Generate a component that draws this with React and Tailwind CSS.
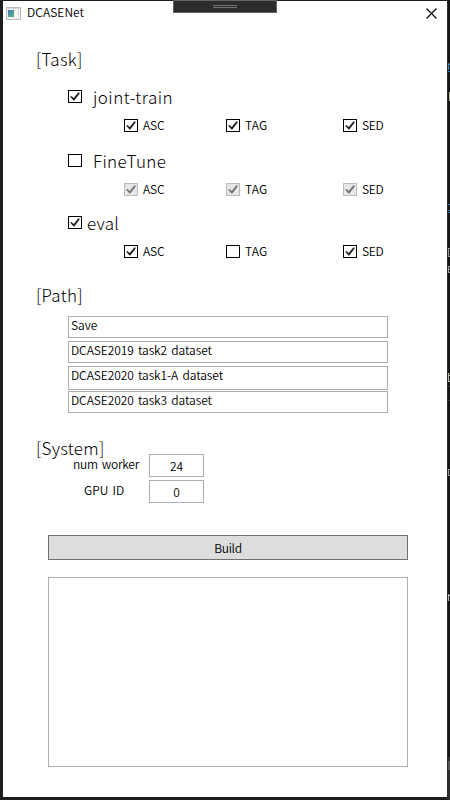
import React from "react";

const checkRow = "flex h-[13px] items-center";

function Check({ checked, disabled }) {
  return (
    <span
      className={
        "block h-[13px] w-[14px] shrink-0 border " +
        (disabled ? "border-[#bcbcbc] bg-[#e6e6e6]" : "border-black bg-white")
      }
    >
      {checked && (
        <svg width="12" height="11" viewBox="0 0 12 11" className="block">
          <path
            d="M1.2 5.8 L2.5 4.9 L4.7 7 L9.2 1.4 L10.6 1.5 L10.5 2.7 L5.3 9.4 L4.5 9.4 Z"
            fill={disabled ? "#707070" : "#212121"}
          />
        </svg>
      )}
    </span>
  );
}

function Option({ label, width, checked = true, disabled, spacing }) {
  return (
    <label className={`${checkRow} ${width}`}>
      <Check checked={checked} disabled={disabled} />
      <span className={`-mt-[2px] ml-[5px] text-[12px] leading-[14px] ${spacing}`}>{label}</span>
    </label>
  );
}

function Options({ tag = true, disabled, className }) {
  return (
    <div className={`ml-[121px] flex ${className}`}>
      <Option label="ASC" width="w-[102px]" spacing="tracking-[-0.1px]" disabled={disabled} />
      <Option label="TAG" width="w-[117px]" spacing="tracking-[0.2px]" checked={tag} disabled={disabled} />
      <Option label="SED" width="w-[60px]" spacing="tracking-[-0.3px]" disabled={disabled} />
    </div>
  );
}

function Task({ label, checked, gap, spacing, className }) {
  return (
    <label className={`ml-[65px] ${checkRow} ${className}`}>
      <Check checked={checked} />
      <span className={`mt-px text-[17px] leading-[20px] font-light ${gap} ${spacing}`}>{label}</span>
    </label>
  );
}

function Heading({ children, className, spacing }) {
  return (
    <h2 className={`ml-[33px] h-5 text-[17px] leading-[20px] font-light ${spacing} ${className}`}>{children}</h2>
  );
}

function Field({ children, className }) {
  return (
    <div className={`w-[320px] border border-[#abadb3] pl-[2px] text-[12px] leading-[16px] ${className}`}>
      {children}
    </div>
  );
}

function Setting({ label, value, spacing }) {
  return (
    <div className="flex h-[23px]">
      <span className={`text-[12px] leading-[20px] ${spacing}`}>{label}</span>
      <span className="ml-auto w-[55px] border border-[#abadb3] text-center text-[12px] leading-[21px]">
        {value}
      </span>
    </div>
  );
}

function Backdrop() {
  return (
    <div className="absolute top-0 left-[447px] h-[800px] w-[3px] overflow-hidden border-l border-[#2b2b2c] bg-[#151516]">
      <span className="absolute top-[63px] left-0 h-[7px] w-px bg-[#3e86b7]" />
      <span className="absolute top-[64px] left-px h-px w-px bg-[#3e86b7]" />
      <span className="absolute top-[71px] left-0 h-px w-[2px] bg-[#3e86b7]" />
      <span className="absolute top-[92px] left-px h-[9px] w-px bg-[#b9b9a8]" />
      <span className="absolute top-[204px] left-0 h-px w-[2px] bg-[#3478a8]" />
      <span className="absolute top-[210px] left-0 h-px w-[2px] bg-[#3478a8]" />
      <span className="absolute top-[212px] left-0 h-px w-[2px] bg-[#3478a8]" />
      <span className="absolute top-[248px] left-0 h-[9px] w-[5px] border border-[#999]" />
      <span className="absolute top-[266px] left-0 h-[7px] w-[5px] border border-[#999]" />
      <span className="absolute top-[269px] left-0 h-px w-[2px] bg-[#999]" />
      <span className="absolute top-[373px] left-0 h-[9px] w-px bg-[#b9b9a8]" />
      <span className="absolute top-[375px] left-0 h-px w-[2px] bg-[#b9b9a8]" />
      <span className="absolute top-[381px] left-px h-px w-px bg-[#b9b9a8]" />
      <span className="absolute top-[386px] left-0 h-px w-[2px] bg-[#333337]" />
      <span className="absolute top-[400px] left-0 h-px w-[2px] bg-[#333337]" />
      <span className="absolute top-[469px] left-0 h-[7px] w-[5px] border border-[#999]" />
      <span className="absolute top-[594px] left-0 h-[7px] w-px bg-[#b8b8b8]" />
      <span className="absolute top-[595px] left-px h-px w-px bg-[#b8b8b8]" />
      <span className="absolute top-[757px] left-0 h-[43px] w-[2px] bg-[#2d2d30]" />
      <span className="absolute top-[761px] left-0 h-[9px] w-[2px] bg-[#555558]" />
    </div>
  );
}

export default function App() {
  return (
    <div className="relative h-[800px] w-[450px] overflow-hidden bg-[#1d1d1e] pt-px pl-[3px] font-['Noto_Sans_CJK_KR','Open_Sans',sans-serif] font-[350] whitespace-nowrap text-black">
      <Backdrop />
      <main className="flex h-[796px] w-[444px] flex-col bg-white">
        <header className="flex h-[24px] shrink-0 items-center justify-between pr-[10px] pl-[3px]">
          <div className="flex items-center">
            <svg width="15" height="13" viewBox="0 0 15 13">
              <defs>
                <linearGradient id="pane" x1="0" y1="0" x2="1" y2="1">
                  <stop offset="0" stopColor="#3f78b5" />
                  <stop offset="1" stopColor="#62b87c" />
                </linearGradient>
              </defs>
              <path d="M.5.5h14v12H.5z" fill="#f0f1f2" stroke="#b4babf" />
              <path d="M1 1h13v1H1z" fill="#d3d7db" />
              <path d="M2 3h6v7H2z" fill="url(#pane)" />
              <path d="M9 3h2v7H9z" fill="#fafafa" />
              <path d="M12 3h1v5h-1z" fill="#d5d9dc" />
            </svg>
            <span className="-mt-[2px] ml-[6px] text-[12px] leading-[14px] tracking-[0.05px]">DCASENet</span>
          </div>
          <svg width="11" height="11" viewBox="0 0 11 11">
            <path d="M.5.5l10 10M10.500.5l-10 10" stroke="#000" strokeWidth="1.1" />
          </svg>
        </header>

        <Heading className="mt-[24px]" spacing="tracking-[0.25px]">[Task]</Heading>
        <Task className="mt-[21px]" label="joint-train" checked gap="ml-[11px]" spacing="tracking-[0.45px]" />
        <Options className="mt-[16px]" />
        <Task className="mt-[22px]" label="FineTune" gap="ml-[11px]" spacing="tracking-[0.35px]" />
        <Options className="mt-[16px]" disabled />
        <Task className="mt-[20px]" label="eval" checked gap="ml-[5px]" spacing="tracking-[0.2px]" />
        <Options className="mt-[16px]" tag={false} />

        <Heading className="mt-[27px]" spacing="tracking-[0.25px]">[Path]</Heading>
        <div className="mt-[11px] ml-[65px] flex flex-col tracking-[-0.08px] [word-spacing:1.6px]">
          <Field className="h-[22px]">Save</Field>
          <Field className="mt-[3px] h-[22px]">DCASE2019 task2 dataset</Field>
          <Field className="mt-[3px] h-[24px]">DCASE2020 task1-A dataset</Field>
          <Field className="mt-px h-[22px]">DCASE2020 task3 dataset</Field>
        </div>

        <Heading className="mt-[25px]" spacing="tracking-[0.25px]">[System]</Heading>
        <div className="mt-[-4px] ml-[70px] flex w-[131px] flex-col gap-[3px] [word-spacing:1.6px]">
          <Setting label="num worker" value="24" spacing="tracking-[-0.25px]" />
          <Setting label="GPU ID" value="0" spacing="pl-[11px]" />
        </div>

        <button className="mt-[32px] ml-[45px] h-[25px] w-[360px] shrink-0 border border-[#707070] bg-[#ddd] text-[12px] leading-[23px] tracking-[-0.3px]">
          Build
        </button>
        <div className="mt-[17px] ml-[45px] h-[190px] w-[360px] shrink-0 border border-[#abadb3]" />
      </main>

      <div className="absolute top-0 left-[173px] flex h-[13px] w-[104px] flex-col items-center justify-center gap-px border border-[#646464] bg-[#2d2d30]">
        <span className="h-px w-6 bg-[#717171]" />
        <span className="h-px w-6 bg-[#717171]" />
      </div>
    </div>
  );
}
